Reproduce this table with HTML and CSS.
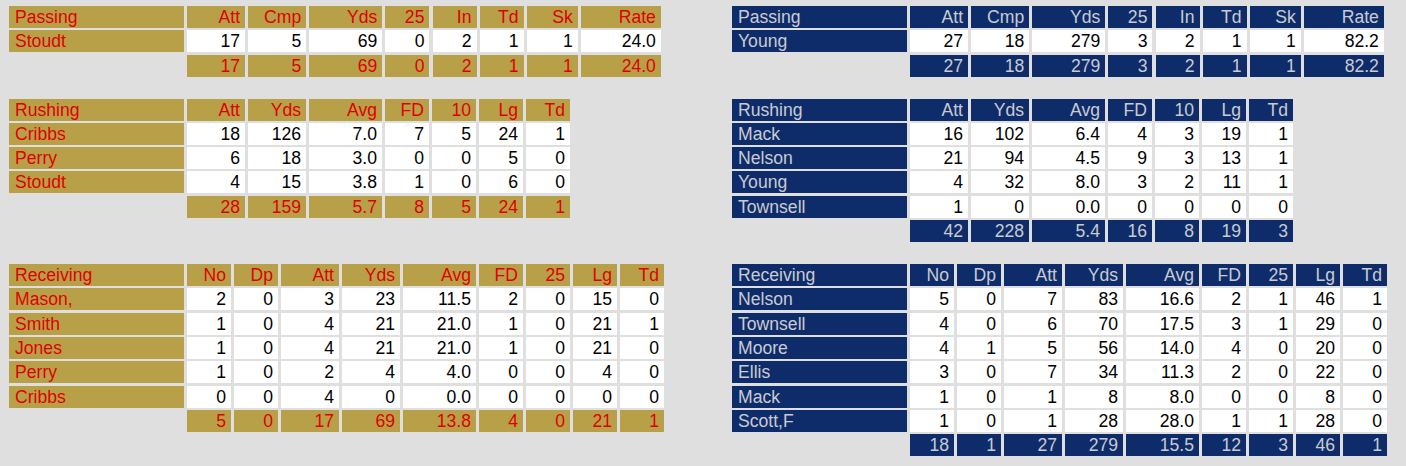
FILE: index.html
```html
<!DOCTYPE html>
<html>
<head>
<meta charset="utf-8">
<link rel="stylesheet" href="styles.css">
</head>
<body>
<div class="board">

  <div class="stat pass gold">
    <div class="c h l">Passing</div><div class="c h">Att</div><div class="c h">Cmp</div><div class="c h">Yds</div><div class="c h">25</div><div class="c h">In</div><div class="c h">Td</div><div class="c h">Sk</div><div class="c h">Rate</div>
    <div class="c n">Stoudt</div><div class="c v">17</div><div class="c v">5</div><div class="c v">69</div><div class="c v">0</div><div class="c v">2</div><div class="c v">1</div><div class="c v">1</div><div class="c v">24.0</div>
    <div class="c e"></div><div class="c t">17</div><div class="c t">5</div><div class="c t">69</div><div class="c t">0</div><div class="c t">2</div><div class="c t">1</div><div class="c t">1</div><div class="c t">24.0</div>
  </div>

  <div class="stat pass navy">
    <div class="c h l">Passing</div><div class="c h">Att</div><div class="c h">Cmp</div><div class="c h">Yds</div><div class="c h">25</div><div class="c h">In</div><div class="c h">Td</div><div class="c h">Sk</div><div class="c h">Rate</div>
    <div class="c n">Young</div><div class="c v">27</div><div class="c v">18</div><div class="c v">279</div><div class="c v">3</div><div class="c v">2</div><div class="c v">1</div><div class="c v">1</div><div class="c v">82.2</div>
    <div class="c e"></div><div class="c t">27</div><div class="c t">18</div><div class="c t">279</div><div class="c t">3</div><div class="c t">2</div><div class="c t">1</div><div class="c t">1</div><div class="c t">82.2</div>
  </div>

  <div class="stat rush gold">
    <div class="c h l">Rushing</div><div class="c h">Att</div><div class="c h">Yds</div><div class="c h">Avg</div><div class="c h">FD</div><div class="c h">10</div><div class="c h">Lg</div><div class="c h">Td</div>
    <div class="c n">Cribbs</div><div class="c v">18</div><div class="c v">126</div><div class="c v">7.0</div><div class="c v">7</div><div class="c v">5</div><div class="c v">24</div><div class="c v">1</div>
    <div class="c n">Perry</div><div class="c v">6</div><div class="c v">18</div><div class="c v">3.0</div><div class="c v">0</div><div class="c v">0</div><div class="c v">5</div><div class="c v">0</div>
    <div class="c n">Stoudt</div><div class="c v">4</div><div class="c v">15</div><div class="c v">3.8</div><div class="c v">1</div><div class="c v">0</div><div class="c v">6</div><div class="c v">0</div>
    <div class="c e"></div><div class="c t">28</div><div class="c t">159</div><div class="c t">5.7</div><div class="c t">8</div><div class="c t">5</div><div class="c t">24</div><div class="c t">1</div>
  </div>

  <div class="stat rush navy">
    <div class="c h l">Rushing</div><div class="c h">Att</div><div class="c h">Yds</div><div class="c h">Avg</div><div class="c h">FD</div><div class="c h">10</div><div class="c h">Lg</div><div class="c h">Td</div>
    <div class="c n">Mack</div><div class="c v">16</div><div class="c v">102</div><div class="c v">6.4</div><div class="c v">4</div><div class="c v">3</div><div class="c v">19</div><div class="c v">1</div>
    <div class="c n">Nelson</div><div class="c v">21</div><div class="c v">94</div><div class="c v">4.5</div><div class="c v">9</div><div class="c v">3</div><div class="c v">13</div><div class="c v">1</div>
    <div class="c n">Young</div><div class="c v">4</div><div class="c v">32</div><div class="c v">8.0</div><div class="c v">3</div><div class="c v">2</div><div class="c v">11</div><div class="c v">1</div>
    <div class="c n">Townsell</div><div class="c v">1</div><div class="c v">0</div><div class="c v">0.0</div><div class="c v">0</div><div class="c v">0</div><div class="c v">0</div><div class="c v">0</div>
    <div class="c e"></div><div class="c t">42</div><div class="c t">228</div><div class="c t">5.4</div><div class="c t">16</div><div class="c t">8</div><div class="c t">19</div><div class="c t">3</div>
  </div>

  <div class="stat recv gold">
    <div class="c h l">Receiving</div><div class="c h">No</div><div class="c h">Dp</div><div class="c h">Att</div><div class="c h">Yds</div><div class="c h">Avg</div><div class="c h">FD</div><div class="c h">25</div><div class="c h">Lg</div><div class="c h">Td</div>
    <div class="c n">Mason,</div><div class="c v">2</div><div class="c v">0</div><div class="c v">3</div><div class="c v">23</div><div class="c v">11.5</div><div class="c v">2</div><div class="c v">0</div><div class="c v">15</div><div class="c v">0</div>
    <div class="c n">Smith</div><div class="c v">1</div><div class="c v">0</div><div class="c v">4</div><div class="c v">21</div><div class="c v">21.0</div><div class="c v">1</div><div class="c v">0</div><div class="c v">21</div><div class="c v">1</div>
    <div class="c n">Jones</div><div class="c v">1</div><div class="c v">0</div><div class="c v">4</div><div class="c v">21</div><div class="c v">21.0</div><div class="c v">1</div><div class="c v">0</div><div class="c v">21</div><div class="c v">0</div>
    <div class="c n">Perry</div><div class="c v">1</div><div class="c v">0</div><div class="c v">2</div><div class="c v">4</div><div class="c v">4.0</div><div class="c v">0</div><div class="c v">0</div><div class="c v">4</div><div class="c v">0</div>
    <div class="c n">Cribbs</div><div class="c v">0</div><div class="c v">0</div><div class="c v">4</div><div class="c v">0</div><div class="c v">0.0</div><div class="c v">0</div><div class="c v">0</div><div class="c v">0</div><div class="c v">0</div>
    <div class="c e"></div><div class="c t">5</div><div class="c t">0</div><div class="c t">17</div><div class="c t">69</div><div class="c t">13.8</div><div class="c t">4</div><div class="c t">0</div><div class="c t">21</div><div class="c t">1</div>
  </div>

  <div class="stat recv navy">
    <div class="c h l">Receiving</div><div class="c h">No</div><div class="c h">Dp</div><div class="c h">Att</div><div class="c h">Yds</div><div class="c h">Avg</div><div class="c h">FD</div><div class="c h">25</div><div class="c h">Lg</div><div class="c h">Td</div>
    <div class="c n">Nelson</div><div class="c v">5</div><div class="c v">0</div><div class="c v">7</div><div class="c v">83</div><div class="c v">16.6</div><div class="c v">2</div><div class="c v">1</div><div class="c v">46</div><div class="c v">1</div>
    <div class="c n">Townsell</div><div class="c v">4</div><div class="c v">0</div><div class="c v">6</div><div class="c v">70</div><div class="c v">17.5</div><div class="c v">3</div><div class="c v">1</div><div class="c v">29</div><div class="c v">0</div>
    <div class="c n">Moore</div><div class="c v">4</div><div class="c v">1</div><div class="c v">5</div><div class="c v">56</div><div class="c v">14.0</div><div class="c v">4</div><div class="c v">0</div><div class="c v">20</div><div class="c v">0</div>
    <div class="c n">Ellis</div><div class="c v">3</div><div class="c v">0</div><div class="c v">7</div><div class="c v">34</div><div class="c v">11.3</div><div class="c v">2</div><div class="c v">0</div><div class="c v">22</div><div class="c v">0</div>
    <div class="c n">Mack</div><div class="c v">1</div><div class="c v">0</div><div class="c v">1</div><div class="c v">8</div><div class="c v">8.0</div><div class="c v">0</div><div class="c v">0</div><div class="c v">8</div><div class="c v">0</div>
    <div class="c n">Scott,F</div><div class="c v">1</div><div class="c v">0</div><div class="c v">1</div><div class="c v">28</div><div class="c v">28.0</div><div class="c v">1</div><div class="c v">1</div><div class="c v">28</div><div class="c v">0</div>
    <div class="c e"></div><div class="c t">18</div><div class="c t">1</div><div class="c t">27</div><div class="c t">279</div><div class="c t">15.5</div><div class="c t">12</div><div class="c t">3</div><div class="c t">46</div><div class="c t">1</div>
  </div>

</div>
</body>
</html>
```

FILE: styles.css
```css
html, body {
  margin: 0;
  background: #dfdfdf;
}

body {
  padding: 6px 0 0 9px;
  font-family: "Liberation Sans", Arial, sans-serif;
  font-size: 17.6px;
}

.board {
  display: grid;
  grid-template-columns: 723px auto;
  row-gap: 22px;
  align-items: start;
  justify-items: start;
}

.stat {
  display: grid;
  column-gap: 3.12px;
  row-gap: 2.3px;
  grid-auto-rows: 22px;
}

.pass { grid-template-columns: 175px 58px 58px 73px 44px 44px 44px 51px 80px; }
.rush { grid-template-columns: 175px 58px 58px 73px 44px 44px 44px 44px; column-gap: 3px; }
.recv { grid-template-columns: 175px 44px 44px 58px 58px 73px 44px 44px 44px 44px; column-gap: 3px; }

.gold { --team-bg: #b8a048; --team-fg: #e00000; }
.navy { --team-bg: #0f2c6a; --team-fg: #c9cbd0; }

.c {
  line-height: 22px;
  height: 22px;
  padding: 0 5px 0 6px;
  text-align: right;
  white-space: nowrap;
  overflow: hidden;
}

.h, .n, .t {
  background: var(--team-bg);
  color: var(--team-fg);
}

.l, .n { text-align: left; }

.v {
  background: #ffffff;
  color: #000000;
}

.e { background: transparent; }
```
